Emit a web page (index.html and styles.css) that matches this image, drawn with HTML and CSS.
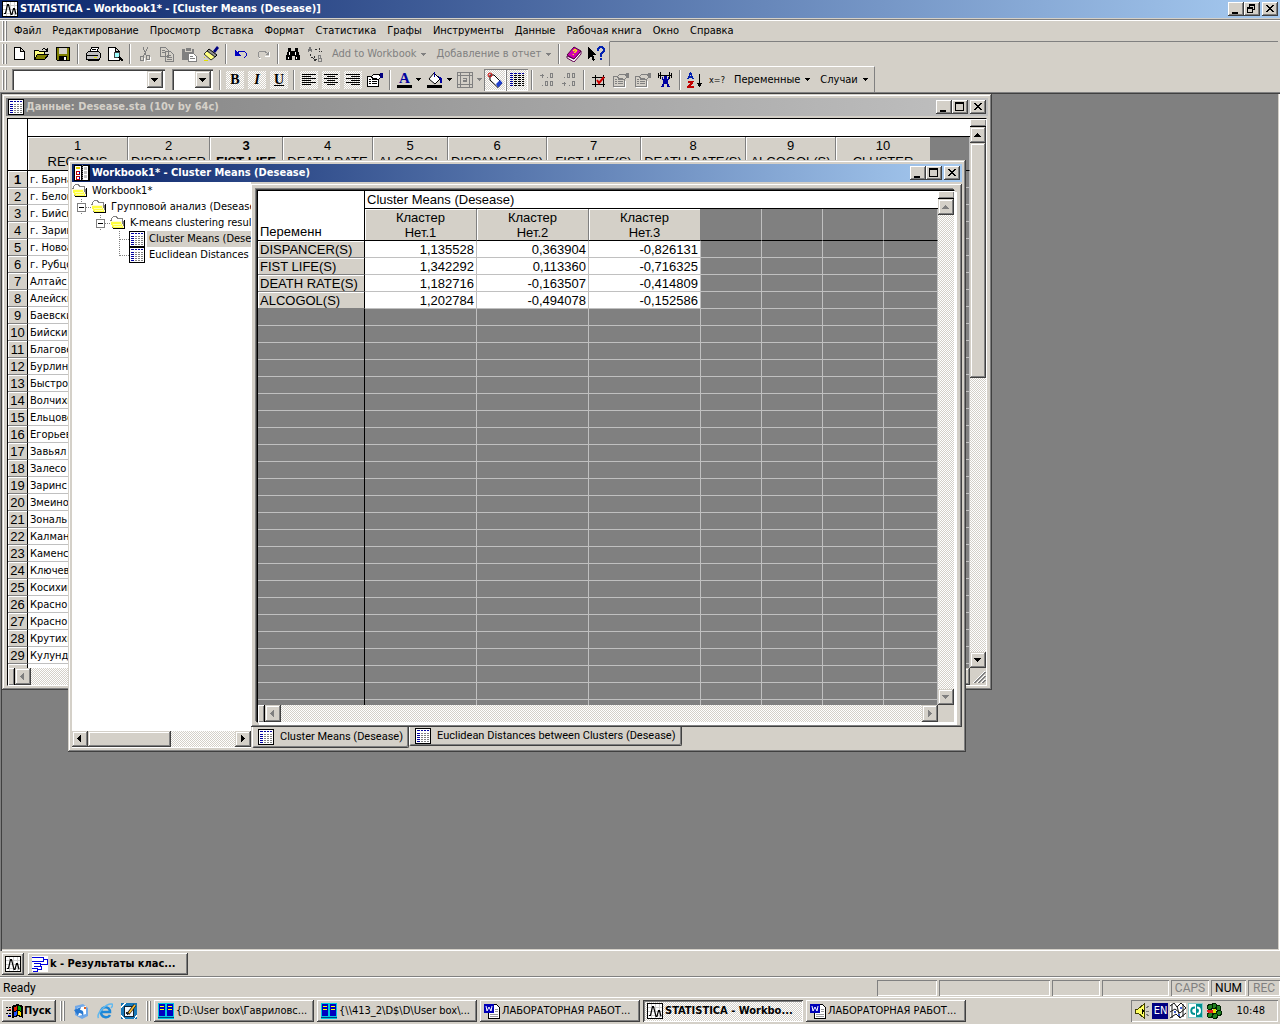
FILE: index.html
```html
<!DOCTYPE html>
<html lang="ru">
<head>
<meta charset="utf-8">
<title>STATISTICA - Workbook1*</title>
<link rel="stylesheet" href="styles.css">
</head>
<body>
<svg class="defs" width="0" height="0" aria-hidden="true">
  <symbol id="app" viewBox="0 0 16 16"><rect x=".5" y=".5" width="15" height="15" fill="#fff" stroke="#000"/><path d="M1 4.500h14M1 8.500h14M1 12.500h14M4.500 1v14M8.500 1v14M12.500 1v14" stroke="#d0d0d0"/><path d="M2 12.500h1.500l2-9h1l2.500 10h1l1.500-6h1l1.500 6" fill="none" stroke="#000" stroke-width="1.200" shape-rendering="auto"/></symbol>
  <symbol id="sheet" viewBox="0 0 16 16"><rect x=".5" y=".5" width="15" height="15" fill="#fff" stroke="#000"/><path d="M2 2h3v1H2zM6 2h2v1H6zM9 2h2v1H9zM12 2h2v1h-2zM2 5h3v1H2zM2 7h3v1H2zM2 9h3v1H2zM2 11h3v1H2zM2 13h3v1H2z" fill="#0000a0"/><path d="M6 5h2v1H6zM9 5h2v1H9zM12 5h2v1h-2zM6 7h2v1H6zM9 7h2v1H9zM12 7h2v1h-2zM6 9h2v1H6zM9 9h2v1H9zM12 9h2v1h-2zM6 11h2v1H6zM9 11h2v1H9zM12 11h2v1h-2zM6 13h2v1H6zM9 13h2v1H9zM12 13h2v1h-2z" fill="#808080"/></symbol>
  <symbol id="book" viewBox="0 0 16 16"><rect width="16" height="16" fill="#000"/><path d="M1 1h6v14H1zM9 1h5v14H9z" fill="#fff"/><path d="M2 2h4v2H2z" fill="#e0d000"/><path d="M2 6.500h3v3H2zM2 11.500h3v3H2z" fill="none" stroke="#c00000"/><path d="M5 7v2M5 12v2" stroke="#0000c0"/><path d="M10 2h3v3h-3zM10 6h3v3h-3zM10 10h3v3h-3z" fill="#c0c0c0"/><path d="M8.500 0v16" stroke="#808080" stroke-dasharray="1 1"/></symbol>
  <symbol id="folder" viewBox="0 0 16 16"><path d="M1 4l2-3h4l1 2h5v3h2v8H3L0 6z" fill="#808080"/><path d="M2 4l1-2h3l1 2h5v3H3z" fill="#fff"/><path d="M0 6h11l3 7H3z" fill="#ffff40"/><path d="M0 6.500h11l3 7" fill="none" stroke="#fffbd0"/><path d="M3 13.500h11.500V5" fill="none" stroke="#000"/><path d="M3 9h8v1H3zM4 11h8v1H4z" fill="#ffffb0"/></symbol>
  <symbol id="new" viewBox="0 0 16 16"><path d="M3.500 1.500h6l4 4v8h-10zM9.500 1.500v4h4" fill="#fff" stroke="#000"/></symbol>
  <symbol id="open" viewBox="0 0 16 16"><path d="M1.500 13.500v-9h4l1 1h5v3" fill="#ffff80" stroke="#000"/><path d="M1.500 13.500l3-5h11l-4 5z" fill="#808000" stroke="#000"/><path d="M9 3.500l2-1 2 1 1 1M14.500 2v3h-3" fill="none" stroke="#000"/></symbol>
  <symbol id="save" viewBox="0 0 16 16"><path d="M1.500 1.500h13v13h-12l-1-1z" fill="#808000" stroke="#000"/><path d="M4 2h8v6H4z" fill="#d4d0c8"/><path d="M4 10h8v5H4z" fill="#000"/><path d="M9 11h2v3H9z" fill="#fff"/></symbol>
  <symbol id="print" viewBox="0 0 16 16"><path d="M4.500 6.500l2-5h7l-2 5z" fill="#fff" stroke="#000"/><path d="M1.500 7.500l2-2h10l2 2v4l-2 2h-12z" fill="#c0c0c0" stroke="#000"/><path d="M2 9.500h11M3 14.500h10l2-2M7 3.500h4" stroke="#000" fill="none"/><path d="M9 11.500h3" stroke="#e0e000"/></symbol>
  <symbol id="preview" viewBox="0 0 16 16"><path d="M1.500 1.500h7l4 4v9h-11zM8.500 1.500v4h4" fill="#fff" stroke="#000"/><circle cx="10" cy="9" r="3" fill="#a0ffff" stroke="#444"/><path d="M12 11l4 4" stroke="#000" stroke-width="2"/></symbol>
  <symbol id="cut" viewBox="0 0 16 16"><path d="M6 1l3 8M11 1L7 9M7 9l-2 2M9 9l1 2" fill="none" stroke="#808080"/><path d="M3.500 10.500h3v4h-3zM9.500 9.500h3v4h-3z" fill="none" stroke="#808080"/><path d="M13.500 11v3.500H10M7.500 12v3.500" fill="none" stroke="#fff"/></symbol>
  <symbol id="copy" viewBox="0 0 16 16"><path d="M1.500 1.500h5l3 3v6h-8zM6.500 5.500h5l3 3v7h-8z" fill="#d4d0c8" stroke="#808080"/><path d="M3 4.500h3M3 6.500h3M8 9.500h4M8 11.500h5M8 13.500h5" stroke="#808080"/></symbol>
  <symbol id="paste" viewBox="0 0 16 16"><path d="M1 3h12v11H1z" fill="#808080"/><path d="M4 1h6v4H4z" fill="#808080" stroke="#d4d0c8"/><path d="M7.500 7.500h5l3 3v5h-8z" fill="#fff" stroke="#808080"/><path d="M9 10.500h3M9 12.500h5" stroke="#808080"/></symbol>
  <symbol id="brush" viewBox="0 0 16 16"><g shape-rendering="auto"><path d="M10 5l4-5 2 2-4 5z" fill="#000080"/><path d="M6 3l8 6-2 2-8-6z" fill="#909090" stroke="#000"/><path d="M4 5l8 6-4 3-7-6z" fill="#ffff80" stroke="#333"/></g><path d="M1 11.500h1M1 14.500h4" stroke="#e0e000" fill="none"/></symbol>
  <symbol id="undo" viewBox="0 0 16 16"><path d="M2 4v5h5zM4 7l3-2h4l2 2v3l-2 2" fill="none" stroke="#0000c0"/><path d="M2 5v4h4z" fill="#0000c0"/></symbol>
  <symbol id="redo" viewBox="0 0 16 16"><path d="M12 7L9 5H5L3 7v3l2 2" fill="none" stroke="#909090"/><path d="M14 5v4h-4z" fill="#909090"/><path d="M4 12l2 1M14.500 6v4H10" stroke="#fff" fill="none"/></symbol>
  <symbol id="find" viewBox="0 0 16 16"><path d="M3 2h3v3h4V2h3v3l2 5v4h-5v-4H7v4H1v-4l2-5z" fill="#000"/><path d="M4 6v3M10 6v3M3 11v2M11 11v2" stroke="#fff"/></symbol>
  <symbol id="replace" viewBox="0 0 16 16"><path d="M1 6l2-5 2 5M2 4.500h3" fill="none" stroke="#777"/><path d="M11.500 9.500v6h3v-3h-3h2v-3z" fill="none" stroke="#808080"/><path d="M8 3h3M12 2v4l3-1M3 8l1 3 3 2M7 10v5l3-2" fill="none" stroke="#333" stroke-dasharray="2 1"/></symbol>
  <symbol id="help" viewBox="0 0 16 16"><g shape-rendering="auto"><path d="M1 10v2l7 4 7-8V5l-7 8z" fill="#fff" stroke="#600050"/><path d="M1 9l7-8 7 4-7 8z" fill="#d000b0" stroke="#500040"/><path d="M7 5l2-1.500 1.500 1-1 1.500-1.500.5M7.500 8l-.5 1" fill="none" stroke="#ffff00" stroke-width="1.300"/></g></symbol>
  <symbol id="what" viewBox="0 0 18 16"><path d="M1 1v12l3-3 2 5 2-1-2-5h4z" fill="#000"/><path d="M11 5V3l2-2h2l2 2v2l-3 3v3M13 13h2" fill="none" stroke="#0020b0" stroke-width="2"/></symbol>
  <symbol id="left" viewBox="0 0 16 16"><path d="M1 2.500h14M1 4.500h9M1 6.500h14M1 8.500h9M1 10.500h14M1 12.500h9" stroke="#000"/></symbol>
  <symbol id="center" viewBox="0 0 16 16"><path d="M1 2.500h14M4 4.500h8M1 6.500h14M4 8.500h8M1 10.500h14M4 12.500h8" stroke="#000"/></symbol>
  <symbol id="right" viewBox="0 0 16 16"><path d="M1 2.500h14M6 4.500h9M1 6.500h14M6 8.500h9M1 10.500h14M6 12.500h9" stroke="#000"/></symbol>
  <symbol id="props" viewBox="0 0 16 16"><path d="M.5 4.500h11v10H.5z" fill="#fff" stroke="#000"/><path d="M2 7.500h2M5 7.500h5M2 9.500h2M5 9.500h5M2 11.500h2M5 11.500h5" stroke="#000"/><path d="M4 5l3-3h5l2 3-3 3-2-2-2 1z" fill="#fff" stroke="#000"/><path d="M13 1h3v5h-3z" fill="#000080"/></symbol>
  <symbol id="propsg" viewBox="0 0 16 16"><path d="M.5 4.500h11v10H.5z" fill="#d4d0c8" stroke="#808080"/><path d="M2 7.500h2M5 7.500h5M2 9.500h2M5 9.500h5M2 11.500h2M5 11.500h5" stroke="#808080"/><path d="M4 5l3-3h5l2 3-3 3-2-2-2 1z" fill="#d4d0c8" stroke="#808080"/><path d="M13 1h3v5h-3z" fill="#808080"/><path d="M1 15.500h11.500V9" stroke="#fff" fill="none"/></symbol>
  <symbol id="fill" viewBox="0 0 16 16"><path d="M7 1l6 6-5 5-6-5z" fill="#fff" stroke="#000" shape-rendering="auto"/><path d="M7 0v5M12 5l2 1v5l-1-4z" stroke="#0000a0" fill="#0000a0"/><path d="M0 13h15v3H0z" fill="#000"/></symbol>
  <symbol id="border" viewBox="0 0 16 16"><path d="M.5 .5h15v15H.5zM3.500 3.500h9v9h-9zM3.500 1v14M12.500 1v14M1 3.500h14M1 12.500h14" fill="none" stroke="#808080"/><path d="M6 6.500h3.500v3H6.500v-1.500h3" fill="none" stroke="#808080"/></symbol>
  <symbol id="tag" viewBox="0 0 16 16"><g shape-rendering="auto"><path d="M3 3l4 0 8 8-4 4.500L3 8z" fill="#fff" stroke="#000"/><path d="M9 12l4-4 2.500 3-4.500 4.500z" fill="#2040d0"/><circle cx="3" cy="3" r="2" fill="none" stroke="#d00000"/></g></symbol>
  <symbol id="grid" viewBox="0 0 16 16"><path d="M1 1h3v1H1zM5 1h3v1H5zM9 1h3v1H9zM13 1h2v1h-2zM1 3h3v1H1zM1 5h3v1H1zM1 7h3v1H1zM1 9h3v1H1zM1 11h3v1H1zM1 13h3v1H1z" fill="#0000a0"/><path d="M5 3.500h10M5 5.500h10M5 7.500h10M5 9.500h10M5 11.500h10M5 13.500h10" stroke="#000" stroke-dasharray="3 1"/></symbol>
  <symbol id="inc" viewBox="0 0 16 16"><path d="M1 3.500h4M3 2v4M8 5.500h1M11.500 1.500h2v4h-2zM3 13.500h1M6.500 9.500h2v4h-2zM11.500 9.500h2v4h-2z" fill="none" stroke="#808080"/></symbol>
  <symbol id="dec" viewBox="0 0 16 16"><path d="M3 5.500h1M6.500 1.500h2v4h-2zM11.500 1.500h2v4h-2zM1 11.500h4M3 10v4M8 13.500h1M11.500 9.500h2v4h-2z" fill="none" stroke="#808080"/></symbol>
  <symbol id="hash" viewBox="0 0 16 16"><path d="M1 5.500h13M1 12.500h13M4.500 3v12M12.500 3v12" stroke="#000"/><path d="M6 8l2 3 5-6" fill="none" stroke="#d00000" stroke-width="2" shape-rendering="auto"/></symbol>
  <symbol id="lift" viewBox="0 0 16 16"><path d="M1 3.500h14M1.500 1v5M3.500 0v7M12.500 0v7M14.500 1v5" stroke="#000"/><path d="M7 4h3v3H7zM6 7h5v5H6zM5 5h1v3H5zM11 5h1v3h-1zM5 12h2v3H4v-1h1zM10 12h2v2h1v1h-3z" fill="#0000a0"/></symbol>
  <symbol id="sort" viewBox="0 0 16 16"><path d="M1 7l2.500-6L6 7M2 5h3" fill="none" stroke="#0020b0" stroke-width="1.500"/><path d="M1 9.500h5L1 15h6" fill="none" stroke="#c00000" stroke-width="2"/><path d="M12 2h1v9h2l-2 4h-1l-2-4h2z" fill="#000"/></symbol>
  <symbol id="tree" viewBox="0 0 16 16"><rect width="16" height="16" fill="#fff"/><path d="M0 1.500h11v4H5M0 5.500h5M11 3.500h4v5H8M2 7.500h6v3H2M5 13.500h4v-4M0 12.500h5v2.500H1" fill="none" stroke="#0000e0"/></symbol>
  <symbol id="win" viewBox="0 0 18 16"><path d="M6 3l5-2 6 2v12l-5-2-6 2z" fill="#000"/><path d="M8 4l3-1v4l-3 1z" fill="#e02000"/><path d="M12 3l3 1v4l-3-1z" fill="#00a000"/><path d="M8 9l3-1v4l-3 1z" fill="#2050ff"/><path d="M12 8l3 1v4l-3-1z" fill="#ffe000"/><path d="M0 4.500h2M3 4.500h2M1 7.500h4M0 10.500h2M3 10.500h2M2 13.500h3" stroke="#000"/><path d="M3 6.500h2" stroke="#e00"/><path d="M2 12.500h3" stroke="#00f"/></symbol>
  <symbol id="mail" viewBox="0 0 16 16"><g shape-rendering="auto"><path d="M2 3l8-2 5 4v8l-6 3-7-4z" fill="#70a8e8"/><path d="M4 5l9-2v8l-8 2z" fill="#fff"/><path d="M1 7l7-3-1 3c3 0 4 2 3 6-1-2-2-3-4-3l-1 3z" fill="#2878d0"/><path d="M11 4h2v2h-2z" fill="#e06020"/></g></symbol>
  <symbol id="ie" viewBox="0 0 16 16"><g shape-rendering="auto"><path d="M13 12c-2 3.500-9 3-9-3 0-6.500 9-6.500 9 0H5" fill="none" stroke="#1e88d8" stroke-width="2.500"/><path d="M1.500 15C-1 11 9 0 15 1c1 1 0 3-1 4" fill="none" stroke="#60b8f0" stroke-width="1.500"/></g></symbol>
  <symbol id="desk" viewBox="0 0 16 16"><rect width="16" height="16" fill="#1878b8"/><path d="M0 3l3-3h2L0 6zM0 11l4 5H2L0 14zM16 11v3l-3 2z" fill="#fff"/><path d="M3.500 3.500h9v10h-9z" fill="#f0f8ff" stroke="#123"/><path d="M5.500 9l1.500 2.500" fill="none" stroke="#222" stroke-width="2"/><path d="M7 11l7-9" stroke="#222" stroke-width="3" shape-rendering="auto"/><path d="M8 10l6-8" stroke="#ffc030" stroke-width="1.500" shape-rendering="auto"/></symbol>
  <symbol id="cab" viewBox="0 0 16 16"><rect width="16" height="16" fill="#00c8e0"/><path d="M1 1h6v12H1zM9 1h6v12H9z" fill="#0000c0"/><path d="M2 3h4v1H2zM2 6h4v1H2zM10 3h4v1h-4zM10 6h4v1h-4z" fill="#ffff00"/><path d="M0 14.500h16" stroke="#004080"/></symbol>
  <symbol id="word" viewBox="0 0 16 16"><path d="M4.500 1.500h8l3 3v11h-11z" fill="#fff" stroke="#000"/><path d="M11 6.500h3M11 8.500h3M6 11.500h8M6 13.500h8" stroke="#999"/><path d="M0 1h10v9H0z" fill="#0000b8"/><path d="M2 3l1 5 2-4 2 4 1-5" fill="none" stroke="#fff" shape-rendering="auto"/></symbol>
  <symbol id="speaker" viewBox="0 0 16 16"><path d="M1 6h3l6-5v14l-6-5H1z" fill="#ffff60" stroke="#404000"/><path d="M8 5l2 3-2 4z" fill="#000"/><path d="M12 5l3-2M12 8h3M12 11l3 2" stroke="#777"/></symbol>
  <symbol id="net" viewBox="0 0 16 16"><rect width="16" height="16" fill="#fff"/><path d="M0 3l4-3 3 4 4-4 5 5M0 9l5-3 5 4 6-5M0 15l6-4 4 4 6-5M2 1v14M7 3l3 12M13 1v13" fill="none" stroke="#111" shape-rendering="auto"/><path d="M4 8h2v2H4zM10 4h2v2h-2zM8 11h2v2H8z" fill="#4060d0"/></symbol>
  <symbol id="teal" viewBox="0 0 16 16"><rect x=".5" y=".5" width="14" height="14" fill="#fff" stroke="#8cc"/><path d="M8 1h6v13H8z" fill="#009090"/><path d="M7 4.500C2 4.500 2 11 7 11" fill="none" stroke="#009090" stroke-width="2" shape-rendering="auto"/><path d="M9 4.500c4 0 4 6.500 0 6.500" fill="none" stroke="#fff" stroke-width="2" shape-rendering="auto"/></symbol>
  <symbol id="flower" viewBox="0 0 16 16"><g fill="#208020" stroke="#002000"><circle cx="8" cy="3" r="2.500"/><circle cx="12.500" cy="5" r="2.500"/><circle cx="13" cy="10" r="2.500"/><circle cx="9" cy="13" r="2.500"/><circle cx="4" cy="12" r="2.500"/><circle cx="4" cy="4" r="2.500"/></g><path d="M1 7h6v3H2z" fill="#e02020"/><circle cx="8.500" cy="8" r="2" fill="#e0e000"/></symbol>
  <symbol id="b-min" viewBox="0 0 16 14"><path d="M4 10h6v2H4z"/></symbol>
  <symbol id="b-max" viewBox="0 0 16 14"><path d="M3 2h9v9H3zM4 4v6h7V4z" fill-rule="evenodd"/></symbol>
  <symbol id="b-res" viewBox="0 0 16 14"><path d="M5 2h6v6H9V7h1V4H6v1H5zM3 5h6v6H3zM4 7v3h4V7z" fill-rule="evenodd"/></symbol>
  <symbol id="b-x" viewBox="0 0 16 14"><path d="M4 3h2v1h1v1h2V4h1V3h2v1h-1v1h-1v1H9v1h1v1h1v1h1v1h-2V9H9V8H7v1H6v1H4V9h1V8h1V7h1V6H6V5H5V4H4z"/></symbol>
  <symbol id="up" viewBox="0 0 8 8"><path d="M3 2h1v1h1v1h1v1h1v1H0V5h1V4h1V3h1z"/></symbol>
  <symbol id="down" viewBox="0 0 8 8"><path d="M0 2h7v1H6v1H5v1H4v1H3V5H2V4H1V3H0z"/></symbol>
  <symbol id="prev" viewBox="0 0 8 8"><path d="M5 0v7H4V6H3V5H2V4H1V3h1V2h1V1h1V0z"/></symbol>
  <symbol id="next" viewBox="0 0 8 8"><path d="M2 0v7h1V6h1V5h1V4h1V3H5V2H4V1H3V0z"/></symbol>
  <symbol id="drop" viewBox="0 0 5 3"><path d="M0 0h5v1H4v1H3v1H2V2H1V1H0z"/></symbol>
  <symbol id="branch" viewBox="0 0 19 16"><path d="M9.500 0v16M14 8.500h5" stroke="#808080" stroke-dasharray="1 1"/><path d="M5.500 4.500h8v8h-8z" fill="#fff" stroke="#808080"/><path d="M7 8.500h5" stroke="#000"/></symbol>
  <symbol id="tee" viewBox="0 0 19 16"><path d="M9.500 0v16M10 8.500h9" stroke="#808080" stroke-dasharray="1 1"/></symbol>
  <symbol id="elbow" viewBox="0 0 19 16"><path d="M9.500 0v9M10 8.500h9" stroke="#808080" stroke-dasharray="1 1"/></symbol>
  <symbol id="size" viewBox="0 0 16 16"><path d="M4 15L15 4M8 15l7-7M12 15l3-3" stroke="#808080" stroke-width="2"/><path d="M3 15L15 3M7 15l8-8M11 15l4-4" stroke="#fff"/></symbol>
</svg>

<header class="title main-title">
  <svg class="i16"><use href="#app"/></svg>
  <h1>STATISTICA - Workbook1* - [Cluster Means (Desease)]</h1>
  <button class="cap" aria-label="Свернуть"><svg><use href="#b-min"/></svg></button>
  <button class="cap" aria-label="Восстановить"><svg><use href="#b-res"/></svg></button>
  <button class="cap close" aria-label="Закрыть"><svg><use href="#b-x"/></svg></button>
</header>

<nav class="menubar">
  <span class="grip"></span>
  <button>Файл</button><button>Редактирование</button><button>Просмотр</button><button>Вставка</button><button>Формат</button><button>Статистика</button><button>Графы</button><button>Инструменты</button><button>Данные</button><button>Рабочая книга</button><button>Окно</button><button>Справка</button>
</nav>

<div class="tool-row">
  <div class="toolbar">
    <span class="grip"></span>
    <button class="tb" aria-label="Создать"><svg><use href="#new"/></svg></button>
    <button class="tb" aria-label="Открыть"><svg><use href="#open"/></svg></button>
    <button class="tb" aria-label="Сохранить"><svg><use href="#save"/></svg></button>
    <span class="sep"></span>
    <button class="tb" aria-label="Печать"><svg><use href="#print"/></svg></button>
    <button class="tb" aria-label="Предварительный просмотр"><svg><use href="#preview"/></svg></button>
    <span class="sep"></span>
    <button class="tb" aria-label="Вырезать"><svg><use href="#cut"/></svg></button>
    <button class="tb" aria-label="Копировать"><svg><use href="#copy"/></svg></button>
    <button class="tb" aria-label="Вставить"><svg><use href="#paste"/></svg></button>
    <button class="tb" aria-label="Формат по образцу"><svg><use href="#brush"/></svg></button>
    <span class="sep"></span>
    <button class="tb" aria-label="Отменить"><svg><use href="#undo"/></svg></button>
    <button class="tb" aria-label="Вернуть"><svg><use href="#redo"/></svg></button>
    <span class="sep"></span>
    <button class="tb" aria-label="Найти"><svg><use href="#find"/></svg></button>
    <button class="tb" aria-label="Заменить"><svg><use href="#replace"/></svg></button>
    <button class="tb-text off">Add to Workbook <svg class="drop"><use href="#drop"/></svg></button>
    <button class="tb-text off">Добавление в отчет <svg class="drop"><use href="#drop"/></svg></button>
    <span class="sep"></span>
    <button class="tb" aria-label="Справка"><svg><use href="#help"/></svg></button>
    <button class="tb" aria-label="Что это такое"><svg class="wide"><use href="#what"/></svg></button>
  </div>
  <div class="tool-rest"></div>
</div>
<div class="tool-row second">
  <div class="toolbar">
    <span class="grip"></span>
    <span class="combo font"><select aria-label="Шрифт"><option></option></select><span class="arrow"><svg><use href="#down"/></svg></span></span>
    <span class="combo size"><select aria-label="Размер"><option></option></select><span class="arrow"><svg><use href="#down"/></svg></span></span>
    <span class="sep"></span>
    <button class="tb serif dither">B</button>
    <button class="tb serif dither italic">I</button>
    <button class="tb serif dither under">U</button>
    <span class="sep"></span>
    <button class="tb dither" aria-label="По левому краю"><svg><use href="#left"/></svg></button>
    <button class="tb dither" aria-label="По центру"><svg><use href="#center"/></svg></button>
    <button class="tb dither" aria-label="По правому краю"><svg><use href="#right"/></svg></button>
    <button class="tb" aria-label="Свойства"><svg><use href="#props"/></svg></button>
    <span class="sep"></span>
    <button class="tb split"><span class="letter">A</span><svg class="drop"><use href="#drop"/></svg></button>
    <button class="tb split" aria-label="Заливка"><svg><use href="#fill"/></svg><svg class="drop"><use href="#drop"/></svg></button>
    <button class="tb split off" aria-label="Границы"><svg><use href="#border"/></svg><svg class="drop"><use href="#drop"/></svg></button>
    <button class="tb pressed" aria-label="Метки"><svg><use href="#tag"/></svg></button>
    <button class="tb pressed" aria-label="Сетка"><svg><use href="#grid"/></svg></button>
    <span class="sep"></span>
    <button class="tb" aria-label="Увеличить разрядность"><svg><use href="#inc"/></svg></button>
    <button class="tb" aria-label="Уменьшить разрядность"><svg><use href="#dec"/></svg></button>
    <span class="sep"></span>
    <button class="tb" aria-label="Выделение"><svg><use href="#hash"/></svg></button>
    <button class="tb" aria-label="Спецификации"><svg><use href="#propsg"/></svg></button>
    <button class="tb" aria-label="Все спецификации"><svg><use href="#propsg"/></svg></button>
    <button class="tb" aria-label="Вес"><svg><use href="#lift"/></svg></button>
    <span class="sep"></span>
    <button class="tb" aria-label="Сортировка"><svg><use href="#sort"/></svg></button>
    <button class="tb formula">x=?</button>
    <button class="tb-text">Переменные <svg class="drop"><use href="#drop"/></svg></button>
    <button class="tb-text">Случаи <svg class="drop"><use href="#drop"/></svg></button>
  </div>
</div>

<main class="mdi">
  <section class="window data-window">
    <header class="title inactive">
      <svg class="i16"><use href="#sheet"/></svg>
      <h2>Данные: Desease.sta (10v by 64c)</h2>
      <button class="cap" aria-label="Свернуть"><svg><use href="#b-min"/></svg></button>
      <button class="cap" aria-label="Развернуть"><svg><use href="#b-max"/></svg></button>
      <button class="cap close" aria-label="Закрыть"><svg><use href="#b-x"/></svg></button>
    </header>
    <div class="client">
      <div class="grid-view">
        <table class="sheet raw">
          <colgroup><col class="c-num"><col class="c1"><col class="c2"><col class="c3"><col class="c4"><col class="c5"><col class="c6"><col class="c7"><col class="c8"><col class="c9"><col class="c10"><col></colgroup>
          <thead>
            <tr class="band"><th rowspan="2" class="corner"></th><td colspan="11"></td></tr>
            <tr class="heads"><th>1<br>REGIONS</th><th>2<br>DISPANCER</th><th class="current">3<br>FIST LIFE</th><th>4<br>DEATH RATE</th><th>5<br>ALCOGOL</th><th>6<br>DISPANCER(S)</th><th>7<br>FIST LIFE(S)</th><th>8<br>DEATH RATE(S)</th><th>9<br>ALCOGOL(S)</th><th>10<br>CLUSTER</th><td class="void"></td></tr>
          </thead>
          <tbody>
            <tr><th class="current">1</th><td>г. Барна</td><td class="void" colspan="10"></td></tr>
            <tr><th>2</th><td>г. Белок</td><td class="void" colspan="10"></td></tr>
            <tr><th>3</th><td>г. Бийск</td><td class="void" colspan="10"></td></tr>
            <tr><th>4</th><td>г. Зарин</td><td class="void" colspan="10"></td></tr>
            <tr><th>5</th><td>г. Новоа</td><td class="void" colspan="10"></td></tr>
            <tr><th>6</th><td>г. Рубцо</td><td class="void" colspan="10"></td></tr>
            <tr><th>7</th><td>Алтайс</td><td class="void" colspan="10"></td></tr>
            <tr><th>8</th><td>Алейски</td><td class="void" colspan="10"></td></tr>
            <tr><th>9</th><td>Баевски</td><td class="void" colspan="10"></td></tr>
            <tr><th>10</th><td>Бийский</td><td class="void" colspan="10"></td></tr>
            <tr><th>11</th><td>Благове</td><td class="void" colspan="10"></td></tr>
            <tr><th>12</th><td>Бурлинс</td><td class="void" colspan="10"></td></tr>
            <tr><th>13</th><td>Быстро</td><td class="void" colspan="10"></td></tr>
            <tr><th>14</th><td>Волчихи</td><td class="void" colspan="10"></td></tr>
            <tr><th>15</th><td>Ельцовс</td><td class="void" colspan="10"></td></tr>
            <tr><th>16</th><td>Егорьев</td><td class="void" colspan="10"></td></tr>
            <tr><th>17</th><td>Завьял</td><td class="void" colspan="10"></td></tr>
            <tr><th>18</th><td>Залесо</td><td class="void" colspan="10"></td></tr>
            <tr><th>19</th><td>Заринс</td><td class="void" colspan="10"></td></tr>
            <tr><th>20</th><td>Змеино</td><td class="void" colspan="10"></td></tr>
            <tr><th>21</th><td>Зональ</td><td class="void" colspan="10"></td></tr>
            <tr><th>22</th><td>Калман</td><td class="void" colspan="10"></td></tr>
            <tr><th>23</th><td>Каменс</td><td class="void" colspan="10"></td></tr>
            <tr><th>24</th><td>Ключев</td><td class="void" colspan="10"></td></tr>
            <tr><th>25</th><td>Косихин</td><td class="void" colspan="10"></td></tr>
            <tr><th>26</th><td>Красно</td><td class="void" colspan="10"></td></tr>
            <tr><th>27</th><td>Красно</td><td class="void" colspan="10"></td></tr>
            <tr><th>28</th><td>Крутихи</td><td class="void" colspan="10"></td></tr>
            <tr><th>29</th><td>Кулунди</td><td class="void" colspan="10"></td></tr>
            <tr><th>30</th><td></td><td class="void" colspan="10"></td></tr>
          </tbody>
        </table>
      </div>
      <div class="vscroll">
        <span class="splitter"></span>
        <button class="sb" aria-label="Вверх"><svg><use href="#up"/></svg></button>
        <span class="thumb tall"></span>
        <span class="track"></span>
        <button class="sb" aria-label="Вниз"><svg><use href="#down"/></svg></button>
      </div>
      <div class="hscroll">
        <span class="splitter"></span>
        <button class="sb off" aria-label="Влево"><svg><use href="#prev"/></svg></button>
        <span class="track"></span>
        <button class="sb off" aria-label="Вправо"><svg><use href="#next"/></svg></button>
      </div>
      <svg class="i16"><use href="#size"/></svg>
    </div>
  </section>

  <section class="window book-window">
    <header class="title">
      <svg class="i16"><use href="#book"/></svg>
      <h2>Workbook1* - Cluster Means (Desease)</h2>
      <button class="cap" aria-label="Свернуть"><svg><use href="#b-min"/></svg></button>
      <button class="cap" aria-label="Развернуть"><svg><use href="#b-max"/></svg></button>
      <button class="cap close" aria-label="Закрыть"><svg><use href="#b-x"/></svg></button>
    </header>
    <div class="book-body">
      <aside class="tree-pane">
        <ul class="tree">
          <li><svg class="i16"><use href="#folder"/></svg><span>Workbook1*</span></li>
          <li><svg class="twig"><use href="#branch"/></svg><svg class="i16"><use href="#folder"/></svg><span>Групповой анализ (Desease</span></li>
          <li class="deep2"><svg class="twig"><use href="#branch"/></svg><svg class="i16"><use href="#folder"/></svg><span>K-means clustering result</span></li>
          <li class="deep3"><svg class="twig"><use href="#tee"/></svg><svg class="i16"><use href="#sheet"/></svg><span class="chosen">Cluster Means (Dese</span></li>
          <li class="deep3"><svg class="twig"><use href="#elbow"/></svg><svg class="i16"><use href="#sheet"/></svg><span>Euclidean Distances b</span></li>
        </ul>
        <div class="hscroll">
          <button class="sb" aria-label="Влево"><svg><use href="#prev"/></svg></button>
          <span class="thumb"></span>
          <span class="track"></span>
          <button class="sb" aria-label="Вправо"><svg><use href="#next"/></svg></button>
        </div>
      </aside>
      <div class="result-pane">
        <div class="result-frame">
          <div class="client">
            <div class="grid-view">
              <table class="sheet means">
                <colgroup><col class="c-name"><col class="c-val"><col class="c-val"><col class="c-val"><col class="c-empty"><col class="c-empty"><col class="c-empty"><col></colgroup>
                <thead>
                  <tr class="band"><th rowspan="2" class="corner">Переменн</th><td colspan="7">Cluster Means (Desease)</td></tr>
                  <tr class="heads"><th>Кластер<br>Нет.1</th><th>Кластер<br>Нет.2</th><th>Кластер<br>Нет.3</th><td class="void"></td><td class="void"></td><td class="void"></td><td class="void"></td></tr>
                </thead>
                <tbody>
                  <tr><th>DISPANCER(S)</th><td>1,135528</td><td>0,363904</td><td>-0,826131</td><td class="void"></td><td class="void"></td><td class="void"></td><td class="void"></td></tr>
                  <tr><th>FIST LIFE(S)</th><td>1,342292</td><td>0,113360</td><td>-0,716325</td><td class="void"></td><td class="void"></td><td class="void"></td><td class="void"></td></tr>
                  <tr><th>DEATH RATE(S)</th><td>1,182716</td><td>-0,163507</td><td>-0,414809</td><td class="void"></td><td class="void"></td><td class="void"></td><td class="void"></td></tr>
                  <tr><th>ALCOGOL(S)</th><td>1,202784</td><td>-0,494078</td><td>-0,152586</td><td class="void"></td><td class="void"></td><td class="void"></td><td class="void"></td></tr>
                  <tr class="filler"><td class="edge"></td><td></td><td></td><td></td><td></td><td></td><td></td><td></td></tr>
                </tbody>
              </table>
            </div>
            <div class="vscroll">
              <span class="splitter"></span>
              <button class="sb off" aria-label="Вверх"><svg><use href="#up"/></svg></button>
              <span class="track"></span>
              <button class="sb off" aria-label="Вниз"><svg><use href="#down"/></svg></button>
            </div>
            <div class="hscroll">
              <span class="splitter"></span>
              <button class="sb off" aria-label="Влево"><svg><use href="#prev"/></svg></button>
              <span class="track"></span>
              <button class="sb off" aria-label="Вправо"><svg><use href="#next"/></svg></button>
            </div>
          </div>
        </div>
        <div class="tabs" role="tablist">
          <button class="tab active" role="tab" aria-selected="true"><svg class="i16"><use href="#sheet"/></svg>Cluster Means (Desease)</button>
          <button class="tab" role="tab"><svg class="i16"><use href="#sheet"/></svg>Euclidean Distances between Clusters (Desease)</button>
        </div>
      </div>
    </div>
  </section>
</main>

<div class="winbar">
  <button class="task icon" aria-label="STATISTICA"><svg class="i16"><use href="#app"/></svg></button>
  <button class="task bold"><svg class="i16"><use href="#tree"/></svg>k - Результаты клас...</button>
</div>
<div class="status">
  <span class="ready">Ready</span>
  <span class="cell w60"></span><span class="cell w110"></span><span class="cell w48"></span><span class="cell w67"></span>
  <span class="cell off w38">CAPS</span><span class="cell w35">NUM</span><span class="cell off w32">REC</span>
</div>
<footer class="taskbar">
  <button class="task start"><svg class="wide"><use href="#win"/></svg>Пуск</button>
  <span class="grip"></span>
  <div class="quick">
    <button aria-label="Почта"><svg class="i16"><use href="#mail"/></svg></button>
    <button aria-label="Internet Explorer"><svg class="i16"><use href="#ie"/></svg></button>
    <button aria-label="Рабочий стол"><svg class="i16"><use href="#desk"/></svg></button>
  </div>
  <span class="grip"></span>
  <div class="tasks">
    <button class="task"><svg class="i16"><use href="#cab"/></svg>{D:\User box\Гавриловс...</button>
    <button class="task"><svg class="i16"><use href="#cab"/></svg>{\\413_2\D$\D\User box\...</button>
    <button class="task"><svg class="i16"><use href="#word"/></svg>ЛАБОРАТОРНАЯ РАБОТ...</button>
    <button class="task current"><svg class="i16"><use href="#app"/></svg>STATISTICA - Workbo...</button>
    <button class="task"><svg class="i16"><use href="#word"/></svg>ЛАБОРАТОРНАЯ РАБОТ...</button>
  </div>
  <div class="tray">
    <svg class="i16"><use href="#speaker"/></svg><span class="lang">EN</span><svg class="i16"><use href="#net"/></svg><svg class="i16"><use href="#teal"/></svg><svg class="i16"><use href="#flower"/></svg>
    <time>10:48</time>
  </div>
</footer>
</body>
</html>
```
FILE: styles.css
```css
:root {
  --face: #d4d0c8;
  --shade: #808080;
  --dark: #404040;
  --ui: "DejaVu Sans Condensed", "DejaVu Sans", sans-serif;
  --arial: "Liberation Sans", sans-serif;
  --narrow: Roboto, "Liberation Sans", sans-serif;
  --dither: repeating-conic-gradient(#fff 0 25%, var(--face) 0 50%) 0 0 / 2px 2px;
  --raised: inset -1px -1px var(--dark), inset 1px 1px var(--face), inset -2px -2px var(--shade), inset 2px 2px #fff;
  --button: inset -1px -1px var(--dark), inset 1px 1px #fff, inset -2px -2px var(--shade);
}
* { box-sizing: border-box; }
body {
  margin: 0;
  min-height: 100vh;
  display: flex;
  flex-direction: column;
  background: var(--face);
  color: #000;
  font: 11px/16px var(--ui);
  overflow: hidden;
}
button {
  margin: 0;
  padding: 0;
  border: 0;
  background: none;
  color: inherit;
  font: inherit;
  white-space: nowrap;
}
svg { flex: none; display: block; width: 16px; height: 16px; shape-rendering: crispEdges; }
svg.defs { position: absolute; width: 0; height: 0; }
svg.wide { width: 18px; }
svg.drop { width: 5px; height: 3px; }

/* title bars */
.title {
  display: flex;
  align-items: center;
  height: 18px;
  padding: 0 2px;
  background: linear-gradient(90deg, #0a246a, #a6caf0);
  color: #fff;
}
.main-title { margin-bottom: 1px; }
.title.inactive { background: linear-gradient(90deg, #808080, #c0c0c0); color: var(--face); }
.title h1, .title h2 {
  flex: 1;
  margin: 0 0 0 2px;
  font: bold 11px/16px var(--ui);
  white-space: nowrap;
}
.cap { width: 16px; height: 14px; background: var(--face); box-shadow: var(--button); }
.cap svg { height: 14px; }
.cap.close { margin-left: 2px; }

/* menu and toolbars */
.grip {
  flex: none;
  width: 5px;
  height: 20px;
  margin: 0 1px 0 2px;
  background: linear-gradient(90deg, #fff 1px, var(--shade) 1px 2px, transparent 2px 3px, #fff 3px 4px, var(--shade) 4px);
}
.menubar {
  display: flex;
  align-items: center;
  gap: 1px;
  height: 22px;
  border-top: 1px solid var(--shade);
  box-shadow: inset 0 1px #fff;
}
.menubar button { padding: 0 5px; }
.tool-row { display: flex; height: 25px; }
.tool-row.second { height: 26px; }
.tool-rest { flex: 1; border-top: 1px solid var(--shade); margin-right: 2px; }
.toolbar {
  display: flex;
  align-items: center;
  padding-right: 2px;
  border-top: 1px solid #fff;
  border-right: 1px solid var(--shade);
}
.tb { width: 22px; height: 22px; display: flex; align-items: center; justify-content: center; }
.tb.split { width: 30px; gap: 4px; }
.tb.pressed { background: var(--dither); box-shadow: inset 1px 1px var(--shade), inset -1px -1px #fff; }
.tb.dither { background: var(--dither); background-clip: content-box; padding: 2px; }
.tb.serif { font: bold 14px/18px "Liberation Serif", serif; }
.tb.italic { font-style: italic; }
.under { text-decoration: underline; }
.letter {
  width: 15px;
  height: 16px;
  border-bottom: 3px solid #000;
  color: #0000a0;
  font: bold 15px/13px "Liberation Serif", serif;
}
.tb.formula { font-size: 9px; }
.tb-text { display: flex; align-items: center; gap: 5px; height: 22px; padding: 0 4px 0 6px; }
.off { color: var(--shade); }
.off .drop { fill: var(--shade); }
.sep {
  width: 2px;
  height: 20px;
  margin: 0 3px;
  background: linear-gradient(90deg, var(--shade) 1px, #fff 1px);
}
.combo {
  display: flex;
  height: 21px;
  margin: 0 3px 0 4px;
  padding: 2px;
  background: #fff;
  box-shadow: inset 1px 1px var(--shade), inset 2px 2px var(--dark), inset -1px -1px #fff;
}
.combo.font { width: 153px; }
.combo.size { width: 41px; }
.combo select { flex: 1; min-width: 0; appearance: none; border: 0; padding: 0; background: #fff; font: inherit; }
.arrow { display: grid; place-content: center; width: 16px; background: var(--face); box-shadow: var(--raised); }
.arrow svg { width: 8px; height: 8px; }

/* document area */
.mdi {
  flex: 1;
  position: relative;
  overflow: hidden;
  background: #808080;
  box-shadow: inset 1px 1px var(--shade), inset 2px 2px var(--dark), inset -1px -1px #fff, inset -2px -2px var(--face);
}
.window {
  position: absolute;
  display: flex;
  flex-direction: column;
  padding: 4px;
  background: var(--face);
  box-shadow: var(--raised);
}
.data-window { left: 2px; top: 2px; width: 990px; height: 596px; }
.book-window { left: 68px; top: 68px; width: 898px; height: 592px; }
.client {
  flex: 1;
  min-height: 0;
  display: grid;
  grid-template: minmax(0, 1fr) 17px / minmax(0, 1fr) 16px;
  border: 1px solid;
  border-color: #000 #fff #fff #000;
  background: var(--face);
}
.data-window > .client { margin: 2px 1px 0 1px; }
.grid-view { overflow: hidden; background: #808080; }

/* spreadsheets */
.sheet { width: 100%; table-layout: fixed; border-spacing: 0; font: 13px/16px var(--arial); }
.sheet th, .sheet td { padding: 0; white-space: nowrap; overflow: hidden; }
.sheet th { font-weight: normal; background: var(--face); }
.sheet .current { font-weight: bold; }
.sheet .band { height: 18px; }
.sheet .band td { background: #fff; border-bottom: 1px solid #000; padding-left: 2px; line-height: 17px; height: 18px; }
.sheet .corner { background: #fff; border-right: 1px solid #000; border-bottom: 1px solid #000; vertical-align: bottom; }
.sheet .heads th { border-right: 1px solid var(--shade); border-bottom: 1px solid #000; box-shadow: inset 1px 1px #fff; vertical-align: top; }
.sheet .heads .void { border-bottom: 1px solid #000; border-right: 1px solid #c0c0c0; }
.sheet tbody tr { height: 17px; }
.sheet tbody th, .sheet tbody td { height: 17px; padding-top: 2px; line-height: 14px; }
.sheet tbody th { border-right: 1px solid #000; border-bottom: 1px solid var(--shade); box-shadow: inset 1px 1px #fff; }
.sheet tbody td { background: #fff; border-right: 1px solid #c0c0c0; border-bottom: 1px solid #c0c0c0; }
.sheet tbody .void { background: #808080; }
.raw .c-num { width: 20px; }
.raw .c1 { width: 100px; }
.raw .c2 { width: 82px; }
.raw .c3 { width: 73px; }
.raw .c4 { width: 90px; }
.raw .c5 { width: 75px; }
.raw .c6 { width: 99px; }
.raw .c7 { width: 94px; }
.raw .c8 { width: 105px; }
.raw .c9 { width: 90px; }
.raw .c10 { width: 95px; }
.raw .heads { height: 34px; }
.raw .heads th { padding-top: 1px; }
.raw tbody td { font: 11px/14px var(--ui); padding-left: 2px; }
.means .c-name { width: 107px; }
.means .c-val { width: 112px; }
.means .c-empty { width: 61px; }
.means .heads { height: 32px; }
.means .heads th { line-height: 15px; padding-top: 1px; }
.means .corner, .means tbody th { text-align: left; padding-left: 2px; }
.means tbody td { text-align: right; padding-right: 2px; }
.means .filler { height: 408px; }
.means .filler td {
  border-bottom: 0;
  background: repeating-linear-gradient(#808080 0 16px, #c0c0c0 16px 17px);
}
.means .filler .edge { border-right-color: #000; }

/* scroll bars */
.vscroll, .hscroll { display: flex; }
.vscroll { flex-direction: column; }
.track { flex: 1; background: var(--dither); }
.sb { flex: none; display: grid; place-content: center; width: 16px; height: 16px; background: var(--face); box-shadow: var(--raised); }
.sb svg { width: 8px; height: 8px; }
.sb.off { fill: var(--shade); }
.hscroll .sb { height: auto; }
.splitter { flex: none; background: var(--face); box-shadow: inset 1px 1px #fff, inset -1px -1px var(--shade); }
.vscroll .splitter { height: 8px; border-bottom: 1px solid #000; }
.hscroll .splitter { width: 7px; border-right: 1px solid #000; }
.thumb { flex: none; background: var(--face); box-shadow: var(--raised); }
.hscroll .thumb { width: 83px; }
.thumb.tall { height: 235px; }

/* workbook */
.book-body { flex: 1; min-height: 0; display: flex; }
.tree-pane { flex: none; width: 179px; display: flex; flex-direction: column; overflow: hidden; background: #fff; }
.tree-pane .hscroll { height: 16px; margin-bottom: 1px; }
.tree { flex: 1; margin: 0; padding: 1px 0 0; list-style: none; overflow: hidden; }
.tree li { display: flex; height: 16px; overflow: hidden; white-space: nowrap; }
.tree span { padding-left: 2px; margin-left: 2px; }
.tree .chosen { flex: 1; background: var(--face); }
.twig { width: 19px; }
.deep2 { padding-left: 19px; }
.tree .deep3 { padding-left: 38px; }
.result-pane { flex: 1; min-width: 0; display: flex; flex-direction: column; }
.result-frame {
  flex: 1;
  min-height: 0;
  display: flex;
  margin: 2px 0 0;
  padding: 6px 4px 4px;
  box-shadow: inset -1px -1px var(--dark), inset 1px 1px #fff, inset -2px -2px var(--shade);
}
.result-frame .client {
  margin: 0 3px 0 2px;
  box-shadow: -1px -1px var(--dark), -2px -2px var(--shade), 2px 2px #fff;
}
.tabs { display: flex; align-items: flex-start; height: 21px; padding-left: 1px; }
.tab {
  display: flex;
  align-items: center;
  gap: 6px;
  height: 19px;
  padding: 0 5px;
  border-right: 1px solid var(--dark);
  border-bottom: 1px solid var(--dark);
  border-left: 1px solid #fff;
  border-radius: 0 0 2px 2px;
  box-shadow: inset -1px -1px var(--shade);
  font: 11px/16px var(--narrow);
}
.tab.active { height: 21px; }

/* bottom bars */
.task {
  display: flex;
  align-items: center;
  gap: 2px;
  height: 22px;
  padding: 0 4px;
  overflow: hidden;
  background: var(--face);
  box-shadow: var(--button);
}
.winbar { display: flex; align-items: center; gap: 4px; height: 25px; padding: 1px 2px 0; }
.winbar .icon { width: 22px; padding: 0 3px; }
.winbar .bold { width: 160px; font-weight: bold; }
.status {
  display: flex;
  align-items: center;
  gap: 2px;
  height: 21px;
  padding-top: 1px;
  border-top: 1px solid var(--shade);
  box-shadow: inset 0 1px #fff;
  font: 12px/16px var(--narrow);
}
.ready { flex: 1; padding-left: 3px; }
.cell { height: 16px; text-align: center; box-shadow: inset 1px 1px var(--shade), inset -1px -1px #fff; }
.w60 { width: 60px; }
.w110 { width: 111px; }
.w48 { width: 48px; }
.w67 { width: 67px; }
.w38 { width: 38px; }
.w35 { width: 35px; }
.w32 { width: 32px; }
.taskbar { display: flex; align-items: center; height: 27px; padding: 0 2px; border-top: 1px solid #fff; }
.start { width: 54px; font-weight: bold; gap: 0; }
.taskbar .grip { margin: 0 3px 0 4px; }
.quick { display: flex; gap: 8px; padding: 0 5px; }
.tasks { flex: 1; min-width: 0; display: flex; gap: 3px; }
.tasks .task { flex: 0 1 160px; }
.tasks .current { font-weight: bold; background: var(--dither); box-shadow: inset 1px 1px var(--dark), inset -1px -1px #fff, inset 2px 2px var(--shade); }
.tray {
  display: flex;
  align-items: center;
  gap: 2px;
  height: 22px;
  padding: 0 13px 0 3px;
  box-shadow: inset 1px 1px var(--shade), inset -1px -1px #fff;
}
.lang { width: 16px; background: #000080; color: #fff; text-align: center; }
.tray time { margin-left: 12px; }
```
